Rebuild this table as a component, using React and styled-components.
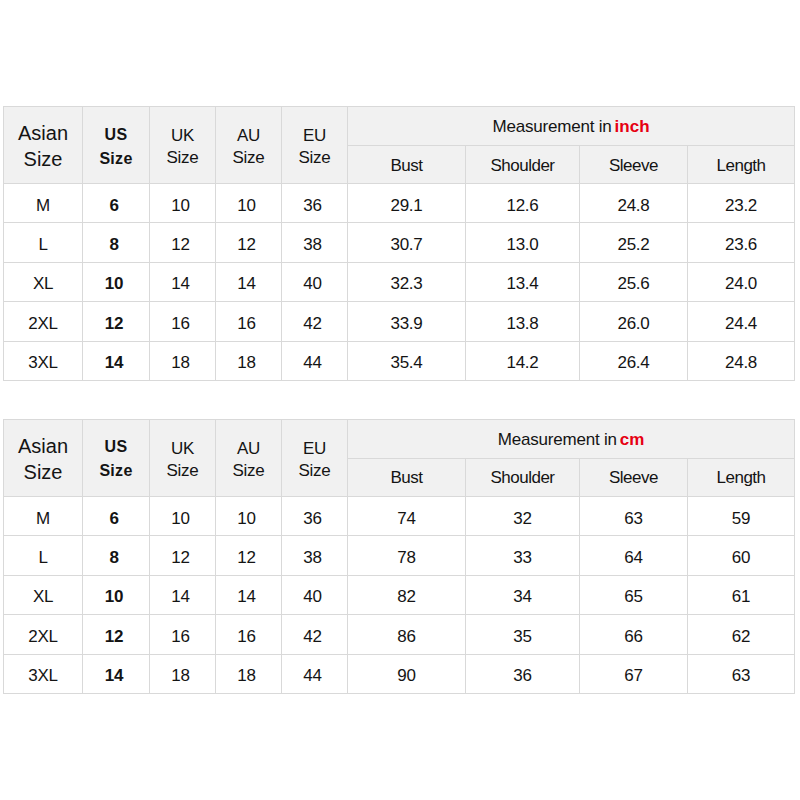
import styled, { createGlobalStyle } from "styled-components";

const GlobalStyle = createGlobalStyle`
  html, body {
    margin: 0;
    padding: 0;
    background: #ffffff;
  }
  body {
    font-family: "Liberation Sans", Arial, sans-serif;
    color: #141414;
  }
`;

const Page = styled.div`
  width: 800px;
  height: 800px;
  padding: 106px 0 0 3px;
  box-sizing: border-box;
  display: flex;
  flex-direction: column;
  gap: 38px;
`;

const Table = styled.table`
  border-collapse: collapse;
  table-layout: fixed;
  width: 791px;

  td,
  th {
    border: 1px solid #d9d9d9;
    text-align: center;
    vertical-align: middle;
    padding: 0;
  }
`;

const HeadRow = styled.tr`
  height: ${(p) => p.h}px;
  background: #f1f1f1;
`;

const Row = styled.tr`
  height: 39.4px;
  background: #ffffff;
`;

const AsianHead = styled.th`
  font-size: 20px;
  font-weight: normal;
  line-height: 26px;
  padding-top: 2px !important;
`;

const UsHead = styled.th`
  font-size: 16px;
  font-weight: bold;
  line-height: 24px;
  letter-spacing: 0.3px;
  padding-top: 3px !important;
`;

const SizeHead = styled.th`
  font-size: 17px;
  font-weight: normal;
  line-height: 22px;
  letter-spacing: -0.3px;
  padding-top: 4px !important;
`;

const Caption = styled.th`
  font-size: 17px;
  font-weight: normal;
  letter-spacing: -0.2px;
  padding-top: 2px !important;
  vertical-align: top;
`;

const Unit = styled.span`
  color: #e60012;
  font-weight: bold;
  letter-spacing: 0;
  margin-left: 3px;
`;

const MeasureHead = styled.th`
  font-size: 17px;
  font-weight: normal;
  letter-spacing: -0.5px;
  padding-top: 2px !important;
`;

const Cell = styled.td`
  font-size: 17px;
  letter-spacing: -0.3px;
  font-weight: ${(p) => (p.$bold ? "bold" : "normal")};
  padding-top: 5px !important;
  padding-right: ${(p) => (p.$nudge ? 4 : 0)}px !important;
`;

const widths = [79, 67, 66, 66, 66, 118, 114, 108, 107];

const inchRows = [
  ["M", "6", "10", "10", "36", "29.1", "12.6", "24.8", "23.2"],
  ["L", "8", "12", "12", "38", "30.7", "13.0", "25.2", "23.6"],
  ["XL", "10", "14", "14", "40", "32.3", "13.4", "25.6", "24.0"],
  ["2XL", "12", "16", "16", "42", "33.9", "13.8", "26.0", "24.4"],
  ["3XL", "14", "18", "18", "44", "35.4", "14.2", "26.4", "24.8"],
];

const cmRows = [
  ["M", "6", "10", "10", "36", "74", "32", "63", "59"],
  ["L", "8", "12", "12", "38", "78", "33", "64", "60"],
  ["XL", "10", "14", "14", "40", "82", "34", "65", "61"],
  ["2XL", "12", "16", "16", "42", "86", "35", "66", "62"],
  ["3XL", "14", "18", "18", "44", "90", "36", "67", "63"],
];

const SizeTable = ({ unit, rows }) => (
  <Table>
    <colgroup>
      {widths.map((w, i) => (
        <col key={i} style={{ width: w }} />
      ))}
    </colgroup>
    <thead>
      <HeadRow h={39}>
        <AsianHead rowSpan={2}>
          Asian
          <br />
          Size
        </AsianHead>
        <UsHead rowSpan={2}>
          US
          <br />
          Size
        </UsHead>
        <SizeHead rowSpan={2}>
          UK
          <br />
          Size
        </SizeHead>
        <SizeHead rowSpan={2}>
          AU
          <br />
          Size
        </SizeHead>
        <SizeHead rowSpan={2}>
          EU
          <br />
          Size
        </SizeHead>
        <Caption colSpan={4}>
          Measurement in<Unit>{unit}</Unit>
        </Caption>
      </HeadRow>
      <HeadRow h={38}>
        <MeasureHead>Bust</MeasureHead>
        <MeasureHead>Shoulder</MeasureHead>
        <MeasureHead>Sleeve</MeasureHead>
        <MeasureHead>Length</MeasureHead>
      </HeadRow>
    </thead>
    <tbody>
      {rows.map((r) => (
        <Row key={r[0]}>
          {r.map((v, i) => (
            <Cell key={i} $bold={i === 1} $nudge={i >= 1 && i <= 4}>
              {v}
            </Cell>
          ))}
        </Row>
      ))}
    </tbody>
  </Table>
);

export default function App() {
  return (
    <Page>
      <GlobalStyle />
      <SizeTable unit="inch" rows={inchRows} />
      <SizeTable unit="cm" rows={cmRows} />
    </Page>
  );
}
